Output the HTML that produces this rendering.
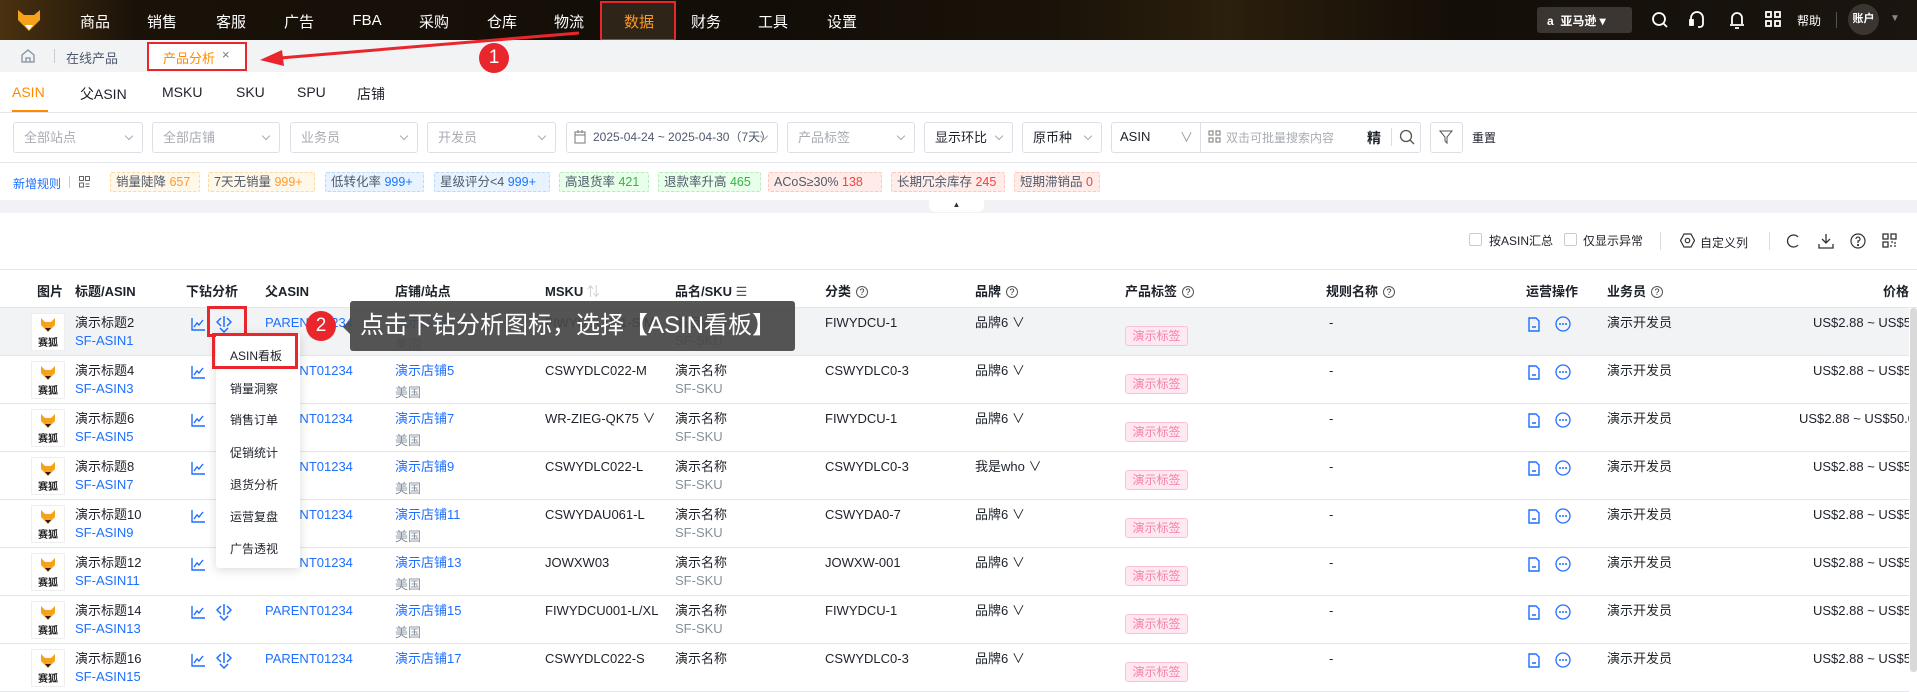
<!DOCTYPE html>
<html><head><meta charset="utf-8"><style>
*{box-sizing:border-box;margin:0;padding:0}
body{width:1917px;height:672px;overflow:hidden;position:relative;background:#fff;font-family:"Liberation Sans","Noto Sans CJK SC",sans-serif;font-size:13px;color:#1d2129}
.a{position:absolute;white-space:nowrap}
.nav{position:absolute;left:0;top:0;width:1917px;height:40px;background:linear-gradient(90deg,#4a3210 0%,#1a1209 7%,#120d07 40%,#1a1309 55%,#2b1f0d 64%,#140e08 76%,#1b1510 100%)}
.nav .m{position:absolute;top:11px;color:#fff;font-size:15px;transform:translateX(-50%);white-space:nowrap}
.tabs{position:absolute;top:40px;left:0;width:1917px;height:32px;background:#f2f3f5}
.sel{position:absolute;top:122px;height:31px;border:1px solid #dcdfe6;border-radius:3px;color:#a8abb2;padding:0 0 0 10px;line-height:29px;white-space:nowrap;overflow:hidden}
.sel:after{content:"";position:absolute;right:10px;top:10px;width:5px;height:5px;border-right:1px solid #a8abb2;border-bottom:1px solid #a8abb2;transform:rotate(45deg)}
.tag{position:absolute;top:172px;height:20px;border:1px dashed;border-radius:2px;padding:0 5px;line-height:18px;font-size:12.5px;color:#4e5969;white-space:nowrap}
.o{background:#fff7e8;border-color:#ffd8a0}.o b{color:#ff9a2e;font-weight:normal}
.bl{background:#e8f3ff;border-color:#b8d8ff}.bl b{color:#1677ff;font-weight:normal}
.g{background:#e8ffea;border-color:#b5ecbc}.g b{color:#3ab345;font-weight:normal}
.rd{background:#ffece8;border-color:#ffc6bd}.rd b{color:#f53f3f;font-weight:normal}
.h{position:absolute;top:281px;font-weight:bold;color:#1d2129;white-space:nowrap}
.q{display:inline-block;width:12px;height:12px;border:1px solid #555;border-radius:50%;font-size:9px;line-height:10px;text-align:center;font-weight:normal;font-style:normal;margin-left:5px;vertical-align:1px}
.r{position:absolute;left:0;width:1909px;height:48px;border-bottom:1px solid #e5e6eb;overflow:hidden}
.r span{position:absolute;white-space:nowrap;line-height:18px}
.l1{top:6px}.l2{top:24px}.l3{top:28px}
.b{color:#1e6fff}.gr{color:#86909c}
.th{position:absolute;left:31px;top:5px;width:34px;height:38px;border:1px solid #eee;background:#fff}
.th em{position:absolute;left:6px;top:20px;font-size:10px;font-weight:bold;font-style:normal;color:#222;white-space:nowrap}
.pt{position:absolute;left:1125px;top:18px;width:63px;height:20px;background:#ffe8f1;border:1px solid #fbc2d6;border-radius:3px;color:#f77fa8;font-size:12px;text-align:center;line-height:18px;white-space:nowrap}
.r svg{position:absolute}
</style></head><body>
<svg width="0" height="0" style="position:absolute"><defs>
<symbol id="fox" viewBox="0 0 16 16"><path d="M1 1 L5 5 L11 5 L15 1 L15 8 L8 15 L1 8 Z" fill="#f7a21b"/><path d="M5 11 L11 11 L8 14.5 Z" fill="#222"/></symbol>
<symbol id="drill" viewBox="0 0 16 18"><g fill="none" stroke="#1e6fff" stroke-width="1.5"><path d="M8 1v11M5 3L1 7l4 4M11 3l4 4-4 4M4 13l4 4 4-4"/></g></symbol>
<symbol id="chart" viewBox="0 0 14 13"><path d="M1 0v12h13M3 9l3-4 2 2 4-5" fill="none" stroke="#1e6fff" stroke-width="1.4"/></symbol>
<symbol id="doc" viewBox="0 0 12 15"><path d="M1 1h7l3 3v10H1z M4 10h4" fill="none" stroke="#1e6fff" stroke-width="1.4"/></symbol>
<symbol id="more" viewBox="0 0 16 16"><circle cx="8" cy="8" r="7" fill="none" stroke="#1e6fff" stroke-width="1.3"/><circle cx="5" cy="8" r="1" fill="#1e6fff"/><circle cx="8" cy="8" r="1" fill="#1e6fff"/><circle cx="11" cy="8" r="1" fill="#1e6fff"/></symbol>
</defs></svg>
<div class="nav">
<svg class="a" style="left:17px;top:9px" width="24" height="24" viewBox="0 0 24 24"><path d="M1 1 L7 6 L17 6 L23 1 L23 11 L12 22 L1 11 Z" fill="#f7a21b"/><path d="M8 16 L16 16 L12 21 Z" fill="#fff"/></svg>
<span class="m" style="left:95px">商品</span><span class="m" style="left:162px">销售</span><span class="m" style="left:231px">客服</span><span class="m" style="left:299px">广告</span><span class="m" style="left:367px;top:12px">FBA</span><span class="m" style="left:434px">采购</span><span class="m" style="left:502px">仓库</span><span class="m" style="left:569px">物流</span>
<div class="a" style="left:600px;top:1px;width:76px;height:40px;background:#2e2418;border:2px solid #e8262b"></div>
<span class="m" style="left:639px;color:#ff9a1e">数据</span><span class="m" style="left:706px">财务</span><span class="m" style="left:773px">工具</span><span class="m" style="left:842px">设置</span>
<div class="a" style="left:1537px;top:7px;width:95px;height:26px;background:rgba(255,255,255,.16);border-radius:3px;color:#fff;font-size:12px;font-weight:bold;padding:5px 0 0 10px">a&nbsp; 亚马逊 ▾</div>
<svg class="a" style="left:1651px;top:11px" width="18" height="18" viewBox="0 0 18 18" fill="none" stroke="#fff" stroke-width="1.8"><circle cx="8" cy="8" r="6"/><path d="M12.5 12.5L16 16"/></svg>
<svg class="a" style="left:1688px;top:10px" width="18" height="20" viewBox="0 0 18 20" fill="none" stroke="#fff" stroke-width="1.8"><path d="M3 11V8a6 6 0 0112 0v3"/><rect x="2" y="10" width="3" height="5" fill="#fff"/><path d="M15 11v3a3 3 0 01-3 3h-2"/></svg>
<svg class="a" style="left:1729px;top:10px" width="16" height="20" viewBox="0 0 16 20" fill="none" stroke="#fff" stroke-width="1.8"><path d="M3 14V8a5 5 0 0110 0v6M1 15h14M6 18h4"/></svg>
<svg class="a" style="left:1765px;top:11px" width="16" height="16" viewBox="0 0 16 16" fill="none" stroke="#fff" stroke-width="1.8"><rect x="1" y="1" width="5" height="5"/><rect x="10" y="1" width="5" height="5"/><rect x="1" y="10" width="5" height="5"/><rect x="10" y="10" width="5" height="5"/></svg>
<span class="a" style="left:1797px;top:12px;color:#fff;font-size:12px">帮助</span>
<div class="a" style="left:1836px;top:12px;width:1px;height:16px;background:#555"></div>
<div class="a" style="left:1848px;top:4px;width:31px;height:31px;border-radius:50%;background:#3a3530;color:#fff;font-size:11px;font-weight:bold;text-align:center;line-height:31px">账户</div>
<span class="a" style="left:1890px;top:13px;color:#888;font-size:10px">▼</span>
</div>
<div class="tabs">
<svg class="a" style="left:20px;top:8px" width="16" height="16" viewBox="0 0 16 16" fill="none" stroke="#86909c" stroke-width="1.3"><path d="M2 7L8 2l6 5v7H2z"/><path d="M6 14v-4h4v4"/></svg>
<div class="a" style="left:54px;top:9px;width:1px;height:14px;background:#ccc"></div>
<span class="a" style="left:66px;top:8px;color:#4e5969">在线产品</span>
<div class="a" style="left:147px;top:2px;width:100px;height:29px;background:#fff;border:2px solid #e8262b"></div>
<span class="a" style="left:163px;top:8px;color:#ff8a00">产品分析</span><span class="a" style="left:222px;top:7px;color:#777">×</span>
</div>
<svg class="a" style="left:250px;top:25px" width="345" height="45" viewBox="0 0 345 45"><path d="M329 8 L30 33" stroke="#e8262b" stroke-width="3"/><path d="M10 35 L32 25 L34 41 Z" fill="#e8262b"/></svg>
<div class="a" style="left:479px;top:43px;width:30px;height:30px;border-radius:50%;background:#e8262b;color:#fff;font-size:19px;text-align:center;line-height:30px">1</div>
<span class="a" style="left:12px;top:84px;font-size:14px;color:#ff8a00">ASIN</span><div class="a" style="left:12px;top:110px;width:36px;height:2px;background:#ff8a00"></div>
<span class="a" style="left:80px;top:84px;font-size:14px">父ASIN</span><span class="a" style="left:162px;top:84px;font-size:14px">MSKU</span><span class="a" style="left:236px;top:84px;font-size:14px">SKU</span><span class="a" style="left:297px;top:84px;font-size:14px">SPU</span><span class="a" style="left:357px;top:84px;font-size:14px">店铺</span>
<div class="a" style="left:0;top:112px;width:1917px;height:1px;background:#e5e6eb"></div>
<div class="sel" style="left:13px;width:130px">全部站点</div><div class="sel" style="left:152px;width:128px">全部店铺</div><div class="sel" style="left:290px;width:128px">业务员</div><div class="sel" style="left:427px;width:129px">开发员</div>
<div class="sel" style="left:566px;width:212px;color:#4e5969;padding-left:26px;font-size:12px">2025-04-24 ~ 2025-04-30（7天）</div>
<svg class="a" style="left:574px;top:130px" width="12" height="14" viewBox="0 0 12 14" fill="none" stroke="#777"><rect x="1" y="2" width="10" height="11"/><path d="M1 5h10M4 0v3M8 0v3"/></svg>
<div class="sel" style="left:787px;width:128px">产品标签</div>
<div class="sel" style="left:924px;width:89px;color:#1d2129">显示环比</div><div class="sel" style="left:1022px;width:80px;color:#1d2129">原币种</div>
<div class="a" style="left:1111px;top:122px;width:310px;height:31px;border:1px solid #dcdfe6;border-radius:3px"></div>
<span class="a" style="left:1120px;top:129px">ASIN</span><span class="a" style="left:1180px;top:127px;color:#999">∨</span>
<div class="a" style="left:1200px;top:123px;width:1px;height:29px;background:#dcdfe6"></div>
<svg class="a" style="left:1208px;top:130px" width="13" height="13" viewBox="0 0 13 13" fill="none" stroke="#777"><rect x="1" y="1" width="4" height="4"/><rect x="8" y="1" width="4" height="4"/><rect x="1" y="8" width="4" height="4"/><rect x="8" y="8" width="4" height="4"/></svg>
<span class="a" style="left:1226px;top:129px;color:#a8abb2;font-size:12px">双击可批量搜索内容</span>
<span class="a" style="left:1367px;top:128px;font-size:14px;font-weight:bold">精</span>
<div class="a" style="left:1391px;top:128px;width:1px;height:18px;background:#ddd"></div>
<svg class="a" style="left:1399px;top:129px" width="16" height="16" viewBox="0 0 16 16" fill="none" stroke="#555" stroke-width="1.3"><circle cx="7" cy="7" r="5.5"/><path d="M11 11l4 4"/></svg>
<div class="a" style="left:1430px;top:122px;width:33px;height:31px;border:1px solid #dcdfe6;border-radius:3px"></div>
<svg class="a" style="left:1439px;top:130px" width="15" height="15" viewBox="0 0 15 15" fill="none" stroke="#555"><path d="M1 1h12L8 7v6L6 11V7z"/></svg>
<span class="a" style="left:1472px;top:129px;font-size:12px">重置</span>
<div class="a" style="left:0;top:162px;width:1917px;height:1px;background:#e5e6eb"></div>
<span class="a" style="left:13px;top:175px;color:#1e6fff;font-size:12px">新增规则</span>
<div class="a" style="left:69px;top:176px;width:1px;height:12px;background:#ccc"></div>
<svg class="a" style="left:79px;top:176px" width="11" height="12" viewBox="0 0 11 12" fill="none" stroke="#666"><rect x=".5" y=".5" width="4" height="4"/><rect x="6.5" y=".5" width="4" height="4"/><rect x=".5" y="7" width="4" height="4"/><path d="M6.5 8h4M6.5 10.5h4"/></svg>
<div class="tag o" style="left:110px;width:90px">销量陡降 <b>657</b></div>
<div class="tag o" style="left:208px;width:107px">7天无销量 <b>999+</b></div>
<div class="tag bl" style="left:325px;width:99px">低转化率 <b>999+</b></div>
<div class="tag bl" style="left:434px;width:116px">星级评分&lt;4 <b>999+</b></div>
<div class="tag g" style="left:559px;width:90px">高退货率 <b>421</b></div>
<div class="tag g" style="left:658px;width:103px">退款率升高 <b>465</b></div>
<div class="tag rd" style="left:768px;width:114px">ACoS≥30% <b>138</b></div>
<div class="tag rd" style="left:891px;width:114px">长期冗余库存 <b>245</b></div>
<div class="tag rd" style="left:1014px;width:86px">短期滞销品 <b>0</b></div>
<div class="a" style="left:0;top:200px;width:1917px;height:13px;background:#f0f2f5"></div>
<div class="a" style="left:929px;top:200px;width:55px;height:12px;background:#fff;border-radius:0 0 6px 6px;font-size:8px;text-align:center;color:#333">▲</div>
<div class="a" style="left:1469px;top:233px;width:13px;height:13px;border:1px solid #ccc;border-radius:2px"></div><span class="a" style="left:1489px;top:232px;font-size:12px">按ASIN汇总</span>
<div class="a" style="left:1564px;top:233px;width:13px;height:13px;border:1px solid #ccc;border-radius:2px"></div><span class="a" style="left:1583px;top:232px;font-size:12px">仅显示异常</span>
<div class="a" style="left:1660px;top:232px;width:1px;height:18px;background:#ddd"></div>
<svg class="a" style="left:1680px;top:233px" width="15" height="15" viewBox="0 0 15 15" fill="none" stroke="#333" stroke-width="1.2"><path d="M4 1h7l3.5 6.5L11 14H4L.5 7.5z"/><circle cx="7.5" cy="7.5" r="2.2"/></svg>
<span class="a" style="left:1700px;top:234px;font-size:12px">自定义列</span>
<div class="a" style="left:1769px;top:232px;width:1px;height:18px;background:#ddd"></div>
<svg class="a" style="left:1785px;top:233px" width="16" height="16" viewBox="0 0 16 16" fill="none" stroke="#333" stroke-width="1.3"><path d="M13 4A6 6 0 1 0 13 12"/></svg>
<svg class="a" style="left:1818px;top:233px" width="16" height="16" viewBox="0 0 16 16" fill="none" stroke="#333" stroke-width="1.3"><path d="M8 1v9M4 6l4 4 4-4M1 11v4h14v-4"/></svg>
<svg class="a" style="left:1850px;top:233px" width="16" height="16" viewBox="0 0 16 16" fill="none" stroke="#333" stroke-width="1.2"><circle cx="8" cy="8" r="7"/><path d="M6 6a2 2 0 1 1 2 2v2"/><circle cx="8" cy="12" r=".5"/></svg>
<svg class="a" style="left:1882px;top:233px" width="15" height="15" viewBox="0 0 15 15" fill="none" stroke="#333" stroke-width="1.3"><rect x="1" y="1" width="5" height="5"/><rect x="9" y="1" width="5" height="5"/><rect x="1" y="9" width="5" height="5"/><path d="M9 9h2M13 9v2M9 12v2M12 13h2"/></svg>
<div class="a" style="left:0;top:269px;width:1917px;height:1px;background:#e5e6eb"></div>
<span class="h" style="left:37px">图片</span><span class="h" style="left:75px">标题/ASIN</span><span class="h" style="left:186px">下钻分析</span><span class="h" style="left:265px">父ASIN</span><span class="h" style="left:395px">店铺/站点</span><span class="h" style="left:545px">MSKU <span style="color:#ccc;font-weight:normal">⇅</span></span><span class="h" style="left:675px">品名/SKU <span style="font-weight:normal;color:#555">☰</span></span><span class="h" style="left:825px">分类<i class="q">?</i></span><span class="h" style="left:975px">品牌<i class="q">?</i></span><span class="h" style="left:1125px">产品标签<i class="q">?</i></span><span class="h" style="left:1326px">规则名称<i class="q">?</i></span><span class="h" style="left:1526px">运营操作</span><span class="h" style="left:1607px">业务员<i class="q">?</i></span><span class="h" style="left:1883px">价格</span>
<div class="a" style="left:0;top:307px;width:1917px;height:1px;background:#e5e6eb"></div>

<div class="r" style="top:308px;background:#f2f3f5"><div class="th"><svg style="left:8px;top:3px" width="16" height="16"><use href="#fox"/></svg><em>赛狐</em></div><span class="l1" style="left:75px">演示标题2</span><span class="l2 b" style="left:75px">SF-ASIN1</span>
<svg style="left:191px;top:10px" width="14" height="13"><use href="#chart"/></svg><svg style="left:216px;top:7px" width="16" height="18"><use href="#drill"/></svg>
<span class="l1 b" style="left:265px">PARENT01234</span><span class="l1 b" style="left:395px">演示店铺3</span><span class="l3 gr" style="left:395px">美国</span><span class="l1" style="left:545px">FIWYDCU001-S/M</span><span class="l1" style="left:675px">演示名称</span><span class="l2 gr" style="left:675px">SF-SKU</span><span class="l1" style="left:825px">FIWYDCU-1</span><span class="l1" style="left:975px">品牌6 ∨</span><div class="pt">演示标签</div><span class="l1" style="left:1329px">-</span>
<svg style="left:1528px;top:9px" width="12" height="15"><use href="#doc"/></svg><svg style="left:1555px;top:8px" width="16" height="16"><use href="#more"/></svg>
<span class="l1" style="left:1607px">演示开发员</span><span class="l1" style="left:1813px">US$2.88 ~ US$50.00</span></div>

<div class="r" style="top:356px"><div class="th"><svg style="left:8px;top:3px" width="16" height="16"><use href="#fox"/></svg><em>赛狐</em></div><span class="l1" style="left:75px">演示标题4</span><span class="l2 b" style="left:75px">SF-ASIN3</span>
<svg style="left:191px;top:10px" width="14" height="13"><use href="#chart"/></svg>
<span class="l1 b" style="left:265px">PARENT01234</span><span class="l1 b" style="left:395px">演示店铺5</span><span class="l3 gr" style="left:395px">美国</span><span class="l1" style="left:545px">CSWYDLC022-M</span><span class="l1" style="left:675px">演示名称</span><span class="l2 gr" style="left:675px">SF-SKU</span><span class="l1" style="left:825px">CSWYDLC0-3</span><span class="l1" style="left:975px">品牌6 ∨</span><div class="pt">演示标签</div><span class="l1" style="left:1329px">-</span>
<svg style="left:1528px;top:9px" width="12" height="15"><use href="#doc"/></svg><svg style="left:1555px;top:8px" width="16" height="16"><use href="#more"/></svg>
<span class="l1" style="left:1607px">演示开发员</span><span class="l1" style="left:1813px">US$2.88 ~ US$50.00</span></div>

<div class="r" style="top:404px"><div class="th"><svg style="left:8px;top:3px" width="16" height="16"><use href="#fox"/></svg><em>赛狐</em></div><span class="l1" style="left:75px">演示标题6</span><span class="l2 b" style="left:75px">SF-ASIN5</span>
<svg style="left:191px;top:10px" width="14" height="13"><use href="#chart"/></svg>
<span class="l1 b" style="left:265px">PARENT01234</span><span class="l1 b" style="left:395px">演示店铺7</span><span class="l3 gr" style="left:395px">美国</span><span class="l1" style="left:545px">WR-ZIEG-QK75 ∨</span><span class="l1" style="left:675px">演示名称</span><span class="l2 gr" style="left:675px">SF-SKU</span><span class="l1" style="left:825px">FIWYDCU-1</span><span class="l1" style="left:975px">品牌6 ∨</span><div class="pt">演示标签</div><span class="l1" style="left:1329px">-</span>
<svg style="left:1528px;top:9px" width="12" height="15"><use href="#doc"/></svg><svg style="left:1555px;top:8px" width="16" height="16"><use href="#more"/></svg>
<span class="l1" style="left:1607px">演示开发员</span><span class="l1" style="left:1799px">US$2.88 ~ US$50.00</span></div>

<div class="r" style="top:452px"><div class="th"><svg style="left:8px;top:3px" width="16" height="16"><use href="#fox"/></svg><em>赛狐</em></div><span class="l1" style="left:75px">演示标题8</span><span class="l2 b" style="left:75px">SF-ASIN7</span>
<svg style="left:191px;top:10px" width="14" height="13"><use href="#chart"/></svg>
<span class="l1 b" style="left:265px">PARENT01234</span><span class="l1 b" style="left:395px">演示店铺9</span><span class="l3 gr" style="left:395px">美国</span><span class="l1" style="left:545px">CSWYDLC022-L</span><span class="l1" style="left:675px">演示名称</span><span class="l2 gr" style="left:675px">SF-SKU</span><span class="l1" style="left:825px">CSWYDLC0-3</span><span class="l1" style="left:975px">我是who ∨</span><div class="pt">演示标签</div><span class="l1" style="left:1329px">-</span>
<svg style="left:1528px;top:9px" width="12" height="15"><use href="#doc"/></svg><svg style="left:1555px;top:8px" width="16" height="16"><use href="#more"/></svg>
<span class="l1" style="left:1607px">演示开发员</span><span class="l1" style="left:1813px">US$2.88 ~ US$50.00</span></div>

<div class="r" style="top:500px"><div class="th"><svg style="left:8px;top:3px" width="16" height="16"><use href="#fox"/></svg><em>赛狐</em></div><span class="l1" style="left:75px">演示标题10</span><span class="l2 b" style="left:75px">SF-ASIN9</span>
<svg style="left:191px;top:10px" width="14" height="13"><use href="#chart"/></svg>
<span class="l1 b" style="left:265px">PARENT01234</span><span class="l1 b" style="left:395px">演示店铺11</span><span class="l3 gr" style="left:395px">美国</span><span class="l1" style="left:545px">CSWYDAU061-L</span><span class="l1" style="left:675px">演示名称</span><span class="l2 gr" style="left:675px">SF-SKU</span><span class="l1" style="left:825px">CSWYDA0-7</span><span class="l1" style="left:975px">品牌6 ∨</span><div class="pt">演示标签</div><span class="l1" style="left:1329px">-</span>
<svg style="left:1528px;top:9px" width="12" height="15"><use href="#doc"/></svg><svg style="left:1555px;top:8px" width="16" height="16"><use href="#more"/></svg>
<span class="l1" style="left:1607px">演示开发员</span><span class="l1" style="left:1813px">US$2.88 ~ US$50.00</span></div>

<div class="r" style="top:548px"><div class="th"><svg style="left:8px;top:3px" width="16" height="16"><use href="#fox"/></svg><em>赛狐</em></div><span class="l1" style="left:75px">演示标题12</span><span class="l2 b" style="left:75px">SF-ASIN11</span>
<svg style="left:191px;top:10px" width="14" height="13"><use href="#chart"/></svg>
<span class="l1 b" style="left:265px">PARENT01234</span><span class="l1 b" style="left:395px">演示店铺13</span><span class="l3 gr" style="left:395px">美国</span><span class="l1" style="left:545px">JOWXW03</span><span class="l1" style="left:675px">演示名称</span><span class="l2 gr" style="left:675px">SF-SKU</span><span class="l1" style="left:825px">JOWXW-001</span><span class="l1" style="left:975px">品牌6 ∨</span><div class="pt">演示标签</div><span class="l1" style="left:1329px">-</span>
<svg style="left:1528px;top:9px" width="12" height="15"><use href="#doc"/></svg><svg style="left:1555px;top:8px" width="16" height="16"><use href="#more"/></svg>
<span class="l1" style="left:1607px">演示开发员</span><span class="l1" style="left:1813px">US$2.88 ~ US$50.00</span></div>

<div class="r" style="top:596px"><div class="th"><svg style="left:8px;top:3px" width="16" height="16"><use href="#fox"/></svg><em>赛狐</em></div><span class="l1" style="left:75px">演示标题14</span><span class="l2 b" style="left:75px">SF-ASIN13</span>
<svg style="left:191px;top:10px" width="14" height="13"><use href="#chart"/></svg><svg style="left:216px;top:7px" width="16" height="18"><use href="#drill"/></svg>
<span class="l1 b" style="left:265px">PARENT01234</span><span class="l1 b" style="left:395px">演示店铺15</span><span class="l3 gr" style="left:395px">美国</span><span class="l1" style="left:545px">FIWYDCU001-L/XL</span><span class="l1" style="left:675px">演示名称</span><span class="l2 gr" style="left:675px">SF-SKU</span><span class="l1" style="left:825px">FIWYDCU-1</span><span class="l1" style="left:975px">品牌6 ∨</span><div class="pt">演示标签</div><span class="l1" style="left:1329px">-</span>
<svg style="left:1528px;top:9px" width="12" height="15"><use href="#doc"/></svg><svg style="left:1555px;top:8px" width="16" height="16"><use href="#more"/></svg>
<span class="l1" style="left:1607px">演示开发员</span><span class="l1" style="left:1813px">US$2.88 ~ US$50.00</span></div>

<div class="r" style="top:644px"><div class="th"><svg style="left:8px;top:3px" width="16" height="16"><use href="#fox"/></svg><em>赛狐</em></div><span class="l1" style="left:75px">演示标题16</span><span class="l2 b" style="left:75px">SF-ASIN15</span>
<svg style="left:191px;top:10px" width="14" height="13"><use href="#chart"/></svg><svg style="left:216px;top:7px" width="16" height="18"><use href="#drill"/></svg>
<span class="l1 b" style="left:265px">PARENT01234</span><span class="l1 b" style="left:395px">演示店铺17</span><span class="l1" style="left:545px">CSWYDLC022-S</span><span class="l1" style="left:675px">演示名称</span><span class="l1" style="left:825px">CSWYDLC0-3</span><span class="l1" style="left:975px">品牌6 ∨</span><div class="pt">演示标签</div><span class="l1" style="left:1329px">-</span>
<svg style="left:1528px;top:9px" width="12" height="15"><use href="#doc"/></svg><svg style="left:1555px;top:8px" width="16" height="16"><use href="#more"/></svg>
<span class="l1" style="left:1607px">演示开发员</span><span class="l1" style="left:1813px">US$2.88 ~ US$50.00</span></div>

<div class="a" style="left:1910px;top:308px;width:7px;height:364px;background:#d9d9d9;border-radius:3px"></div>

<div class="a" style="left:207px;top:306px;width:40px;height:31px;border:3px solid #e8262b"></div>
<div class="a" style="left:216px;top:333px;width:84px;height:235px;background:#fff;box-shadow:0 2px 10px rgba(0,0,0,.15);border-radius:3px"></div>
<span class="a" style="left:230px;top:347px;font-size:12px">ASIN看板</span>
<span class="a" style="left:230px;top:380px;font-size:12px">销量洞察</span>
<span class="a" style="left:230px;top:411px;font-size:12px">销售订单</span>
<span class="a" style="left:230px;top:444px;font-size:12px">促销统计</span>
<span class="a" style="left:230px;top:476px;font-size:12px">退货分析</span>
<span class="a" style="left:230px;top:508px;font-size:12px">运营复盘</span>
<span class="a" style="left:230px;top:540px;font-size:12px">广告透视</span>
<div class="a" style="left:212px;top:333px;width:86px;height:36px;border:3px solid #e8262b"></div>

<div class="a" style="left:306px;top:311px;width:30px;height:30px;border-radius:50%;background:#e8262b;color:#fff;font-size:19px;text-align:center;line-height:30px">2</div>
<div class="a" style="left:343px;top:320px;width:0;height:0;border-top:7px solid transparent;border-bottom:7px solid transparent;border-right:7px solid rgba(70,70,70,.92)"></div>
<div class="a" style="left:350px;top:301px;width:445px;height:50px;background:rgba(70,70,70,.92);border-radius:3px;color:#fff;font-size:24px;line-height:50px;padding-left:10px">点击下钻分析图标，选择【ASIN看板】</div>
</body></html>
